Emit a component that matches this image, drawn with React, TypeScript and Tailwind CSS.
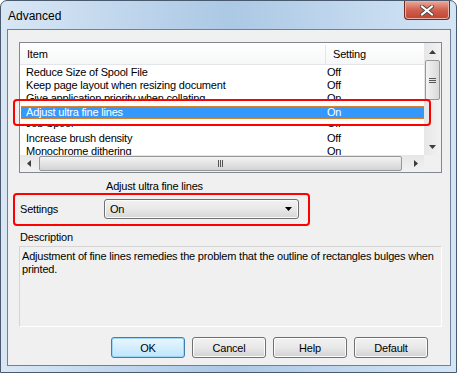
import React from "react";

const rows = [
  { item: "Reduce Size of Spool File", value: "Off" },
  { item: "Keep page layout when resizing document", value: "Off" },
];

function Tri({ dir, color = "#3d3d3d" }: { dir: "up" | "down" | "left" | "right"; color?: string }) {
  const pts = {
    up: "0,4 7,4 3.5,0",
    down: "0,0 7,0 3.5,4",
    left: "4,0 4,7 0,3.5",
    right: "0,0 0,7 4,3.5",
  }[dir];
  const vertical = dir === "up" || dir === "down";
  return (
    <svg width={vertical ? 7 : 4} height={vertical ? 4 : 7} viewBox={vertical ? "0 0 7 4" : "0 0 4 7"}>
      <polygon points={pts} fill={color} />
    </svg>
  );
}

function Row({ item, value }: { item: string; value: string }) {
  return (
    <div className="flex h-[13px] leading-[13px] whitespace-nowrap">
      <div className="w-[306px] pl-[6px]">{item}</div>
      <div className="pl-[1px]">{value}</div>
    </div>
  );
}

function Btn({ label, focused }: { label: string; focused?: boolean }) {
  return (
    <div
      className={
        focused
          ? "w-[74px] h-[21px] rounded-[3px] border border-[#3c7fb1] bg-gradient-to-b from-[#eaf6fd] to-[#bee6fd] flex items-center justify-center pt-[1px] shadow-[inset_0_0_0_1px_#9fd5f5]"
          : "w-[74px] h-[21px] rounded-[3px] border border-[#707070] bg-gradient-to-b from-[#f2f2f2] via-[#e8e8e8] to-[#d2d2d2] flex items-center justify-center pt-[1px] shadow-[inset_0_0_0_1px_#fcfcfc]"
      }
    >
      {label}
    </div>
  );
}

export default function App() {
  return (
    <div className="w-[457px] h-[373px] relative rounded-t-[7px] border border-[#4a5a6e] bg-gradient-to-r from-[#d9e7f5] via-[#abc8e5] to-[#d4e5f5] flex flex-col font-['Liberation_Sans',sans-serif] text-[11px] tracking-[-0.2px] text-black">
      {/* Title bar */}
      <div className="h-[28px] flex items-center pl-[7px] pt-[2px] text-[12px] tracking-normal">Advanced</div>
      <div className="absolute top-0 right-[6px] w-[46px] h-[19px] rounded-b-[4px] border border-t-0 border-[#6d2b22] bg-gradient-to-b from-[#e9a99b] via-[#d0604f] to-[#c2412f] flex items-center justify-center shadow-[inset_0_0_0_1px_#eab3a8]">
        <svg width="14" height="11" viewBox="0 0 14 11">
          <path d="M2 1.5 L12 9.5 M12 1.5 L2 9.5" stroke="#4b4b4b" strokeWidth="4" strokeLinecap="square" />
          <path d="M2 1.5 L12 9.5 M12 1.5 L2 9.5" stroke="#ffffff" strokeWidth="2" strokeLinecap="square" />
        </svg>
      </div>

      {/* Client area */}
      <div className="relative mx-[6px] w-[444px] h-[337px] border border-[#6e8199] bg-[#f0f0f0]">
        {/* List view */}
        <div className="ml-[11px] mt-[12px] w-[423px] h-[131px] border border-[#828790] bg-white flex flex-col">
          <div className="flex h-[112px]">
            <div className="w-[404px] h-[112px] overflow-hidden">
              <div className="flex h-[22px] border-b border-[#e3e5e8] bg-gradient-to-b from-white to-[#f6f7f8] items-center pt-[2px]">
                <div className="w-[306px] pl-[7px] border-r border-[#e3e5e8] h-full flex items-center">Item</div>
                <div className="pl-[7px]">Setting</div>
              </div>
              <div className="h-[1px]" />
              {rows.map((r) => (
                <Row key={r.item} item={r.item} value={r.value} />
              ))}
              <div className="h-[7px] overflow-hidden">
                <Row item="Give application priority when collating" value="On" />
              </div>
              <div className="h-[7px]" />
              <div className="ml-[1px] h-[13px] border-y border-[#d9822e] bg-[#3399ff] text-white flex leading-[11px] whitespace-nowrap">
                <div className="w-[305px] pl-[5px]">Adjust ultra fine lines</div>
                <div className="pl-[1px]">On</div>
              </div>
              <div className="h-[5px]" />
              <div className="h-[8px] overflow-hidden">
                <div className="-mt-[7px]">
                  <Row item="Job Spool" value="Off" />
                </div>
              </div>
              <Row item="Increase brush density" value="Off" />
              <Row item="Monochrome dithering" value="On" />
            </div>
            {/* Vertical scrollbar */}
            <div className="w-[17px] h-[112px] bg-gradient-to-r from-[#e6e6e6] to-[#f2f2f2] flex flex-col">
              <div className="h-[17px] flex items-center justify-center">
                <Tri dir="up" />
              </div>
              <div className="mx-[1px] h-[40px] rounded-[2px] border border-[#979797] bg-gradient-to-r from-[#f3f3f3] to-[#d9d9d9] flex flex-col items-center justify-center gap-[1px]">
                <div className="w-[7px] h-[1px] bg-[#555]" />
                <div className="w-[7px] h-[1px] bg-[#555]" />
                <div className="w-[7px] h-[1px] bg-[#555]" />
              </div>
              <div className="flex-1" />
              <div className="h-[17px] flex items-center justify-center">
                <Tri dir="down" />
              </div>
            </div>
          </div>
          <div className="flex h-[17px]">
            {/* Horizontal scrollbar */}
            <div className="w-[404px] h-[17px] bg-gradient-to-b from-[#e6e6e6] to-[#f2f2f2] flex items-center">
              <div className="w-[17px] h-[17px] flex items-center justify-center">
                <Tri dir="left" />
              </div>
              <div className="ml-[2px] w-[363px] h-[15px] rounded-[2px] border border-[#979797] bg-gradient-to-b from-[#f3f3f3] to-[#d4d4d4] flex items-center justify-center gap-[1px]">
                <div className="w-[1px] h-[7px] bg-[#555]" />
                <div className="w-[1px] h-[7px] bg-[#555]" />
                <div className="w-[1px] h-[7px] bg-[#555]" />
              </div>
              <div className="flex-1" />
              <div className="w-[17px] h-[17px] flex items-center justify-center">
                <Tri dir="right" />
              </div>
            </div>
            <div className="w-[17px] h-[17px] bg-[#f0f0f0]" />
          </div>
        </div>

        {/* Selected item name */}
        <div className="ml-[98px] mt-[7px] leading-[13px]">Adjust ultra fine lines</div>

        {/* Settings combo */}
        <div className="flex items-center mt-[6px]">
          <div className="ml-[12px] w-[84px] leading-[13px]">Settings</div>
          <div className="w-[195px] h-[20px] rounded-[3px] border border-[#707070] bg-gradient-to-b from-[#f2f2f2] via-[#e8e8e8] to-[#d6d6d6] flex items-center justify-between pl-[5px] pr-[6px] shadow-[inset_0_0_0_1px_#fbfbfb]">
            <span>On</span>
            <Tri dir="down" color="#000" />
          </div>
        </div>

        {/* Description */}
        <div className="ml-[12px] mt-[12px] leading-[13px]">Description</div>
        <div className="ml-[11px] mt-[2px] w-[423px] h-[81px] border border-t-[#d5d5d5] border-l-[#d5d5d5] border-r-white border-b-white px-[2px] pt-[3px] leading-[13px]">
          Adjustment of fine lines remedies the problem that the outline of rectangles bulges when printed.
        </div>

        {/* Buttons */}
        <div className="flex gap-[7px] ml-[103px] mt-[10px]">
          <Btn label="OK" focused />
          <Btn label="Cancel" />
          <Btn label="Help" />
          <Btn label="Default" />
        </div>

        {/* Annotation highlights */}
        <div className="absolute left-[5px] top-[69px] w-[418px] h-[27px] rounded-[4px] border-2 border-[#ff0000]" />
        <div className="absolute left-[5px] top-[163px] w-[297px] h-[33px] rounded-[4px] border-2 border-[#ff0000]" />
      </div>
    </div>
  );
}
